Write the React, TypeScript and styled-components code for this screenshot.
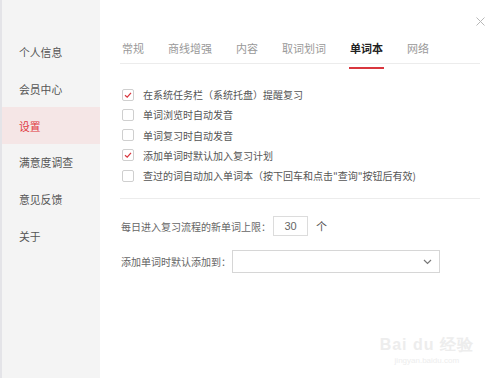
import React from "react";
import styled, { createGlobalStyle } from "styled-components";

const Global = createGlobalStyle`
  html, body { margin: 0; padding: 0; background: #fff; }
  body { font-family: "Microsoft YaHei", "Noto Sans CJK SC", "Noto Sans", sans-serif; }
  * { box-sizing: border-box; }
`;

const Window = styled.div`
  width: 500px;
  height: 378px;
  display: flex;
  background: #fff;
  position: relative;
  overflow: hidden;
`;

const Sidebar = styled.nav`
  width: 100px;
  flex: none;
  background: #f4f4f4;
  padding-top: 34px;
  display: flex;
  flex-direction: column;
  border-left: 2px solid #e4e4e8;
`;

const NavItem = styled.div<{ $active?: boolean }>`
  height: 36.7px;
  display: flex;
  align-items: center;
  padding-left: 17px;
  font-size: 10.8px;
  color: ${(p) => (p.$active ? "#e0393e" : "#555")};
  background: ${(p) => (p.$active ? "#f5e6e6" : "transparent")};
`;

const Main = styled.main`
  flex: 1;
  padding: 38px 20px 0 20px;
  display: flex;
  flex-direction: column;
`;

const Close = styled.div`
  position: absolute;
  top: 8px;
  right: 14px;
  width: 11px;
  height: 11px;
`;

const Tabs = styled.div`
  display: flex;
  border-bottom: 1px solid #ececec;
  height: 26px;
  padding-left: 2px;
`;

const Tab = styled.div<{ $active?: boolean }>`
  font-size: 11px;
  color: ${(p) => (p.$active ? "#222" : "#999")};
  font-weight: ${(p) => (p.$active ? 700 : 400)};
  margin-right: 24px;
  position: relative;
  line-height: 20px;
  &::after {
    content: "";
    display: ${(p) => (p.$active ? "block" : "none")};
    position: absolute;
    left: -1px;
    right: -1px;
    bottom: -6px;
    height: 2px;
    background: #d9363e;
  }
`;

const Options = styled.div`
  padding-top: 24px;
  padding-bottom: 16px;
  border-bottom: 1px solid #ececec;
  display: flex;
  flex-direction: column;
  gap: 7.3px;
`;

const Row = styled.label`
  display: flex;
  align-items: center;
  gap: 9px;
  font-size: 10px;
  color: #555;
  height: 13px;
  padding-left: 2px;
`;

const Box = styled.span`
  width: 12px;
  height: 12px;
  border: 1px solid #cfcfcf;
  border-radius: 2px;
  background: #fff;
  display: flex;
  align-items: center;
  justify-content: center;
  flex: none;
`;

const Field = styled.div<{ $gap: number }>`
  display: flex;
  align-items: center;
  font-size: 10px;
  color: #666;
  padding-left: 1px;
  margin-top: ${(p) => p.$gap}px;
`;

const NumInput = styled.div`
  width: 35px;
  height: 20px;
  border: 1px solid #dcdcdc;
  margin-left: 2px;
  display: flex;
  align-items: center;
  justify-content: center;
  color: #666;
  font-family: "Liberation Sans", Arial, sans-serif;
  font-size: 11px;
`;

const Unit = styled.span`
  margin-left: 8px;
  font-size: 11px;
  color: #555;
`;

const Select = styled.div`
  width: 208px;
  height: 23px;
  border: 1px solid #d6d6d6;
  margin-left: 1px;
  display: flex;
  align-items: center;
  justify-content: flex-end;
  padding-right: 7px;
`;

const Watermark = styled.div`
  position: absolute;
  right: 26px;
  bottom: 13px;
  color: #ededed;
  font-family: "Liberation Sans", Arial, sans-serif;
  text-align: center;
  line-height: 1;
`;

const WmTop = styled.div`
  font-size: 16px;
  font-weight: 700;
  letter-spacing: 1px;
`;

const WmBottom = styled.div`
  font-size: 8px;
  margin-top: 4px;
`;

const Check = () => (
  <svg width="8" height="8" viewBox="0 0 8 8">
    <path d="M1 4.2 L3.2 6.2 L7 1.8" fill="none" stroke="#d9363e" strokeWidth="1.2" />
  </svg>
);

const nav = ["个人信息", "会员中心", "设置", "满意度调查", "意见反馈", "关于"];
const tabs = ["常规", "商线增强", "内容", "取词划词", "单词本", "网络"];
const opts: [string, boolean][] = [
  ["在系统任务栏（系统托盘）提醒复习", true],
  ["单词浏览时自动发音", false],
  ["单词复习时自动发音", false],
  ["添加单词时默认加入复习计划", true],
  ["查过的词自动加入单词本（按下回车和点击\"查询\"按钮后有效)", false],
];

export default function App() {
  return (
    <>
      <Global />
      <Window>
        <Sidebar>
          {nav.map((n) => (
            <NavItem key={n} $active={n === "设置"}>
              {n}
            </NavItem>
          ))}
        </Sidebar>
        <Main>
          <Tabs>
            {tabs.map((t) => (
              <Tab key={t} $active={t === "单词本"}>
                {t}
              </Tab>
            ))}
          </Tabs>
          <Options>
            {opts.map(([t, c]) => (
              <Row key={t}>
                <Box>{c && <Check />}</Box>
                {t}
              </Row>
            ))}
          </Options>
          <Field $gap={17}>
            每日进入复习流程的新单词上限：
            <NumInput>30</NumInput>
            <Unit>个</Unit>
          </Field>
          <Field $gap={14}>
            添加单词时默认添加到：
            <Select>
              <svg width="9" height="6" viewBox="0 0 9 6">
                <path d="M1 1 L4.5 4.5 L8 1" fill="none" stroke="#777" strokeWidth="1.2" />
              </svg>
            </Select>
          </Field>
        </Main>
        <Close>
          <svg width="11" height="11" viewBox="0 0 11 11">
            <path d="M1.5 1.5 L9.5 9.5 M9.5 1.5 L1.5 9.5" stroke="#b8b8b8" strokeWidth="1" />
          </svg>
        </Close>
        <Watermark>
          <WmTop>Bai du 经验</WmTop>
          <WmBottom>jingyan.baidu.com</WmBottom>
        </Watermark>
      </Window>
    </>
  );
}
